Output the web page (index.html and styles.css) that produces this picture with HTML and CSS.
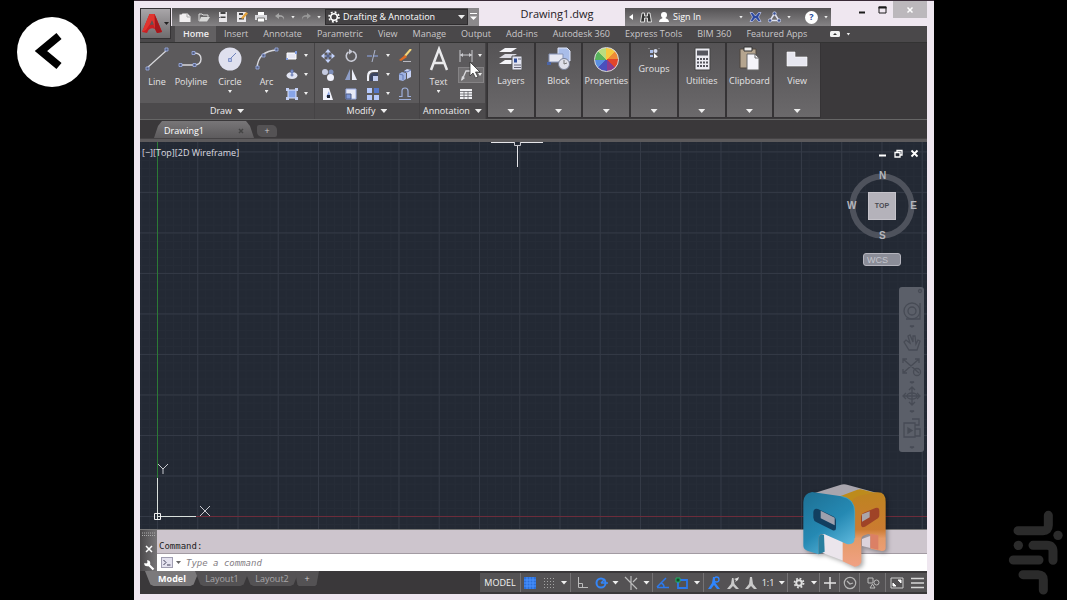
FILE: index.html
```html
<!DOCTYPE html>
<html lang="en">
<head>
<meta charset="utf-8">
<title>Drawing1.dwg</title>
<link rel="stylesheet" href="styles.css">
</head>
<body>
<aside class="side">
  <button class="back" aria-label="Back"><svg width="70" height="70" viewBox="0 0 70 70"><path d="M44 20 26 35l18 15" transform="translate(-2 -1)" fill="none" stroke="#000" stroke-width="8"/></svg></button>
</aside>

<main class="window">
  <header class="titlebar">
    <div class="quick">
      <button aria-label="New"><svg width="14" height="14" viewBox="0 0 14 14"><path d="M1.500 4.500h2l1-1h5l3 3V12h-11z" fill="#f1eff0"/><path d="M9 3.500V7h3.500" fill="none" stroke="#aaa"/></svg></button>
      <button aria-label="Open"><svg width="14" height="14" viewBox="0 0 14 14"><path d="M2 11V4h3l1 1h5v2" fill="none" stroke="#ddd"/><path d="M4 7h9l-3 4.500H2z" fill="#d8d8d8"/></svg></button>
      <button aria-label="Save"><svg width="14" height="14" viewBox="0 0 14 14"><path d="M3 2h8v10H3z" fill="#e9e7ea"/><path d="M4.500 6.500h5V8h-5zM4.500 2h5v2h-5z" fill="#444"/><path d="M3 7h1v1H3z" fill="#667"/></svg></button>
      <button aria-label="Save As"><svg width="14" height="14" viewBox="0 0 14 14"><path d="M2 2h9v10H2z" fill="#e9e7ea"/><path d="M4 8h5v1.500H4zM4 3h4v2H4z" fill="#444"/><path d="M6 8 11 2l2 1.500L8 9z" fill="#e4a33c"/></svg></button>
      <button aria-label="Print"><svg width="14" height="14" viewBox="0 0 14 14"><path d="M4 2h6v3H4z" fill="#fff"/><path d="M1 5h12v5H1z" fill="#d9d9dd"/><path d="M3.500 8h7v4h-7z" fill="#fff" stroke="#777"/></svg></button>
      <button aria-label="Undo"><svg width="12" height="12" viewBox="0 0 12 12"><path d="M5 2 1 5l4 3V6q4-1 5 3 1-5-5-5z" fill="#a5a5a5"/></svg></button>
      <i class="caret"></i>
      <button aria-label="Redo"><svg width="12" height="12" viewBox="0 0 12 12"><path d="M7 2l4 3-4 3V6Q3 5 2 9 1 4 7 4z" fill="#979797"/></svg></button>
      <i class="caret"></i>
      <label class="workspace">
        <svg width="14" height="14" viewBox="0 0 14 14"><circle cx="7" cy="7" r="3.300" fill="none" stroke="#fff" stroke-width="1.600"/><circle cx="7" cy="7" r="5" fill="none" stroke="#fff" stroke-width="1.600" stroke-dasharray="1.900 2.030"/></svg>
        <select aria-label="Workspace"><option>Drafting &amp; Annotation</option></select>
        <i class="caret wide"></i>
      </label>
      <button class="more" aria-label="Customize"><svg width="9" height="10" viewBox="0 0 9 10"><path d="M1 1.500h7" stroke="#fff"/><path d="M1 4.500h7L4.500 8z" fill="#fff"/></svg></button>
    </div>
    <h1 class="title">Drawing1.dwg</h1>
    <div class="info">
      <svg width="6" height="8" viewBox="0 0 6 8"><path d="M5 1v6L1 4z" fill="#fff"/></svg>
      <button aria-label="Search"><svg width="12" height="12" viewBox="0 0 12 12"><path d="M2 2h2.500v3h3V2H10l1.500 9H7.500V7h-3v4H.5z" fill="#333" stroke="#ddd"/></svg></button>
      <button class="signin"><svg width="12" height="12" viewBox="0 0 12 12"><circle cx="6" cy="4" r="3" fill="#fff"/><path d="M4.500 6h3v2h-3z" fill="#fff"/><path d="M1 11q0-3 4-4h2q4 1 4 4z" fill="#fff"/></svg>Sign In</button>
      <i class="caret"></i>
      <button aria-label="Exchange"><svg width="13" height="12" viewBox="0 0 13 12"><path d="M1 1.500h2.500L6.500 5l3-3.500H12L9.500 6l2.500 4.500H9.500l-3-3.500-3 3.500H1L3.500 6z" fill="#2b48a0" stroke="#c7cff0" stroke-width=".7"/></svg></button>
      <button aria-label="Connect"><svg width="13" height="12" viewBox="0 0 13 12"><path d="M6.500 2.500 11 9.500H2z" fill="none" stroke="#dfe3f4" stroke-width="1.500"/><g fill="#3c5395" stroke="#dfe3f4" stroke-width=".7"><circle cx="6.500" cy="2.500" r="1.700"/><circle cx="11" cy="9.500" r="1.700"/><circle cx="2" cy="9.500" r="1.700"/></g></svg></button>
      <i class="caret"></i>
      <button class="help" aria-label="Help"><span>?</span></button>
      <i class="caret"></i>
    </div>
    <div class="winctl">
      <button aria-label="Minimize"><svg width="8" height="8" viewBox="0 0 8 8"><path d="M1 6.500h6" stroke="#1c1c1c" stroke-width="2"/></svg></button>
      <button aria-label="Maximize"><svg width="9" height="8" viewBox="0 0 9 8"><path d="M1 1h7v6H1z" fill="none" stroke="#1c1c1c"/><path d="M.5 1.500h8" stroke="#1c1c1c" stroke-width="2"/></svg></button>
      <button class="close" aria-label="Close"><svg width="8" height="8" viewBox="0 0 8 8"><path d="m1.500 1.500 5 5m0-5-5 5" stroke="#fff" stroke-width="1.500"/></svg></button>
    </div>
  </header>

  <div class="app">
    <button class="appmenu" aria-label="Application menu">
      <svg width="20" height="22" viewBox="0 0 20 22"><path d="M0 19 7.500 1h5L20 19l-5 1-2-4q-4-2-6.500 1L5 20z" fill="#c91f23"/><path d="M7.500 1 0 19l4-2L10 8l3 8 7 3L12.500 1z" fill="#e0352f"/><path d="M10 7 8 12q3-1 4 0z" fill="#5b5557"/><path d="m12.500 1 7.500 18-5 1-2-4z" fill="#a5171c"/></svg>
      <i class="caret dark"></i>
    </button>
    <nav class="tabs">
      <button class="on">Home</button><button>Insert</button><button>Annotate</button><button>Parametric</button><button>View</button><button>Manage</button><button>Output</button><button>Add-ins</button><button>Autodesk 360</button><button>Express Tools</button><button>BIM 360</button><button>Featured Apps</button>
      <button class="mini" aria-label="Minimize ribbon"><svg width="10" height="6" viewBox="0 0 10 6"><rect width="10" height="6" rx="1.500" fill="#f2f2f2"/><path d="M3 4h4L5 2z" fill="#333"/></svg><i class="caret"></i></button>
    </nav>

    <section class="ribbon">
      <div class="panel draw">
        <div class="tools">
          <button class="big"><svg width="26" height="26" viewBox="0 0 26 26"><path d="M3 22 23 4" stroke="#d8d8dc" stroke-width="1.200"/><g fill="#545d7e" stroke="#9db0e8" stroke-width=".8"><path d="M2 21h3v3H2zM21 2h3v3h-3z"/></g></svg>Line</button>
          <button class="big"><svg width="26" height="26" viewBox="0 0 26 26"><path d="M2 19h14q7 0 7-6t-7-6" fill="none" stroke="#d8d8dc" stroke-width="1.400"/><g fill="#545d7e" stroke="#9db0e8" stroke-width=".8"><path d="M1 17.500h3v3H1zM15 17.500h3v3h-3zM14 5.500h3v3h-3z"/></g></svg>Polyline</button>
          <button class="big"><svg width="26" height="26" viewBox="0 0 26 26"><circle cx="13" cy="13" r="11.500" fill="#dfe0ee"/><path d="m13 13 6-6" stroke="#6e83bd"/><path d="M11.500 12.500h3v3h-3z" fill="#b7c3ea" stroke="#6e83bd" stroke-width=".8"/></svg>Circle<i class="caret"></i></button>
          <button class="big"><svg width="26" height="26" viewBox="0 0 26 26"><path d="M3 22Q4 5 23 4" fill="none" stroke="#d8d8dc" stroke-width="1.300"/><g fill="#545d7e" stroke="#9db0e8" stroke-width=".8"><path d="M2 20h3v3H2zM8 8h3v3H8zM21 2h3v3h-3z"/></g></svg>Arc<i class="caret"></i></button>
          <div class="smalls one">
            <button aria-label="Rectangle"><svg width="14" height="14" viewBox="0 0 14 14"><path d="M2 4h9v6H2z" fill="#e5e6f4" stroke="#fff"/><path d="M10 2h2v3h-2zM1 9h2v2H1z" fill="#7f9be0"/></svg></button><i class="caret"></i>
            <button aria-label="Ellipse"><svg width="14" height="14" viewBox="0 0 14 14"><ellipse cx="7" cy="7.500" rx="5.500" ry="3.500" fill="#e2e5f3"/><path d="M6 2h2v3H6zM5.500 7h3M7 5.500v3" fill="#9db0e8" stroke="#5c71ad"/></svg></button><i class="caret"></i>
            <button aria-label="Hatch"><svg width="14" height="14" viewBox="0 0 14 14"><path d="M3 3h8v8H3z" fill="#87a4e8" stroke="#dfe6ff"/><path d="M1 1h3v3H1zM10 1h3v3h-3zM1 10h3v3H1zM10 10h3v3h-3z" fill="#c3d0f6"/></svg></button><i class="caret"></i>
          </div>
        </div>
        <button class="foot">Draw<i class="caret wide"></i></button>
      </div>

      <div class="panel modify">
        <div class="tools">
          <div class="smalls mod">
            <button aria-label="Move"><svg width="14" height="14" viewBox="0 0 14 14"><path d="m7 0 3 3.500H4zM7 14l3-3.500H4zM0 7l3.500-3v6zM14 7l-3.500-3v6z" fill="#c3d2fb"/><path d="M7 3v8M3 7h8" stroke="#a9bbee"/><path d="M5.500 5.500h3v3h-3z" fill="#53628f"/></svg></button>
            <button aria-label="Rotate"><svg width="14" height="14" viewBox="0 0 14 14"><path d="M4.500 3A5 5 0 1 0 9 2.500" fill="none" stroke="#c8cad5" stroke-width="1.600"/><path d="m5 0 4 2.500-4 3z" fill="#c8cad5"/></svg></button>
            <button aria-label="Trim"><svg width="14" height="14" viewBox="0 0 14 14"><path d="M1 7h12" stroke="#8fa8ea" stroke-dasharray="5 1"/><path d="M9 1 6 13" stroke="#aeb6cd"/></svg></button><i class="caret"></i>
            <button aria-label="Erase"><svg width="14" height="14" viewBox="0 0 14 14"><path d="M13 0 7 7" stroke="#f3d67a" stroke-width="2"/><path d="m7 6 2 2-6 4-2-1z" fill="#e06c24"/><path d="M5 12.500h8" stroke="#b9b9c0"/></svg></button>
            <button aria-label="Copy"><svg width="14" height="14" viewBox="0 0 14 14"><circle cx="4" cy="4" r="3" fill="#c5cae0"/><circle cx="10" cy="4" r="2.500" fill="#7d8db8"/><circle cx="9.500" cy="9.500" r="3.500" fill="#f0f1fb"/></svg></button>
            <button aria-label="Mirror"><svg width="14" height="14" viewBox="0 0 14 14"><path d="M6 1v11H1z" fill="#8e9ec8"/><path d="M8 1v11h5z" fill="#eceef8"/></svg></button>
            <button aria-label="Fillet"><svg width="14" height="14" viewBox="0 0 14 14"><path d="M1 13V8q0-6 6-6h5v2H8Q3 4 3 9v4z" fill="#f0f1f8"/><path d="M4 13V9q0-4 4-4h4v8z" fill="#3c4562"/><path d="M7 8h5v5H7z" fill="#c3cdf0"/></svg></button><i class="caret"></i>
            <button aria-label="Explode"><svg width="14" height="14" viewBox="0 0 14 14"><path d="m1 6 3-2 4 1v6l-3 2-4-1z" fill="#9fb2e3"/><path d="m6 3 3-2 4 1v7l-4 2V5z" fill="#c6d1f4"/><path d="m6 3 3 1 4-2M1 6l4 1v5" fill="none" stroke="#6478b0"/></svg></button>
            <button aria-label="Stretch"><svg width="14" height="14" viewBox="0 0 14 14"><path d="M2 1h6l4 12H2z" fill="#f0f1fa"/><path d="m5 10 3-6 1 5z" fill="#8ba4e3"/><path d="M6 8h3v3H6z" fill="#1c2437"/></svg></button>
            <button aria-label="Scale"><svg width="14" height="14" viewBox="0 0 14 14"><path d="M2 2h10v10H2z" fill="#e7e9f6" stroke="#9db0e8"/><path d="M2 7h5v5H2z" fill="#7f98d8" stroke="#4f5d85"/></svg></button>
            <button aria-label="Array"><svg width="14" height="14" viewBox="0 0 14 14"><path d="M1 1h5v5H1zM1 8h5v5H1zM8 8h5v5H8z" fill="#b5c8fc"/><path d="M8 1h5v5H8z" fill="#5677c9"/></svg></button><i class="caret"></i>
            <button aria-label="Offset"><svg width="14" height="14" viewBox="0 0 14 14"><path d="M1 12.500h12M1 9.500h3V4q0-3 3-3t3 3v5.500h3" fill="none" stroke="#9eb0dd" stroke-width="1.200"/></svg></button>
          </div>
        </div>
        <button class="foot">Modify<i class="caret wide"></i></button>
      </div>

      <div class="panel annot">
        <div class="tools">
          <button class="big"><svg width="26" height="26" viewBox="0 0 26 26"><path d="M5 24 13 3l8 21M7.500 17h11" fill="none" stroke="#eaeaec" stroke-width="2.500"/></svg>Text<i class="caret"></i></button>
          <div class="smalls one">
            <button aria-label="Dimension"><svg width="14" height="14" viewBox="0 0 14 14"><path d="M1 1v12M13 1v12M1 6h12" stroke="#c9c9cd" fill="none"/><path d="m1 6 3-2v4zM13 6l-3-2v4z" fill="#c9c9cd"/></svg></button><i class="caret"></i>
            <div class="hot"><button aria-label="Leader"><svg width="14" height="14" viewBox="0 0 14 14"><path d="M2 12 6 3h6" fill="none" stroke="#d8d8dc" stroke-width="1.300"/><path d="m1 13 1-5 3 2z" fill="#d8d8dc"/></svg></button><i class="caret"></i></div>
            <button aria-label="Table"><svg width="14" height="14" viewBox="0 0 14 14"><path d="M1 2h12v10H1z" fill="#f1f1f4"/><path d="M1 4.500h12M1 7h12M1 9.500h12M5 4v8M9 4v8" stroke="#66656b" stroke-width=".8"/></svg></button><i></i>
          </div>
        </div>
        <button class="foot">Annotation<i class="caret wide"></i></button>
        <svg class="cursor" width="13" height="18" viewBox="0 0 13 18"><path d="M1 1v14l3-3 2.500 5 2.500-1-2.500-5H11z" fill="#fff" stroke="#333" stroke-width=".8"/></svg>
      </div>

      <div class="folds">
        <button class="fold"><svg width="26" height="26" viewBox="0 0 26 26"><path d="M7 2h12l-6 4H1z" fill="#f4f4f8"/><path d="M7 8h12l-6 4H1z" fill="#dcdce4"/><path d="M7 14h12l-6 4H1z" fill="#f4f4f8"/><path d="M14 10h10v14H14z" fill="#e3e5f2" stroke="#555"/><path d="M16 12.500h3v4h-3z" fill="#2f4e9b"/><path d="M20 13h3M16 19h7M16 21.500h7" stroke="#667"/></svg>Layers<i class="caret wide"></i></button>
        <button class="fold"><svg width="26" height="26" viewBox="0 0 26 26"><path d="M12 2h9l3 3v10H12z" fill="#a9bde9" stroke="#dfe6fa"/><path d="M3 8h14v8H3z" fill="#e7e8f2" stroke="#8794b8"/><path d="M1 16h4v3H1z" fill="#4a64a6"/><circle cx="18" cy="18" r="5.500" fill="#dfe0ea" stroke="#777f96"/><path d="M18 14v4l3-1" fill="none" stroke="#777"/></svg>Block<i class="caret wide"></i></button>
        <button class="fold"><span class="wheel"></span>Properties<i class="caret wide"></i></button>
        <button class="fold groups"><svg width="14" height="14" viewBox="0 0 14 14"><path d="M3 4h3v3H3zM3 9h3v2H3z" fill="#a9bde9"/><circle cx="8.500" cy="5" r="2" fill="#d3d9ec"/><path d="m7 7 4 4-2 .5L7 12z" fill="#fff"/><path d="M12 2v1M2 2v1" stroke="#aaa"/></svg>Groups<i class="caret wide"></i></button>
        <button class="fold"><svg width="26" height="26" viewBox="0 0 26 26"><path d="M6 2h15v22H6z" fill="#ececf3" stroke="#444"/><path d="M8 4.500h11v5H8z" fill="#55565f"/><path d="M8 13h11M8 16.500h11M8 20h11" stroke="#55565f" stroke-width="2.200" stroke-dasharray="2 1"/></svg>Utilities<i class="caret wide"></i></button>
        <button class="fold"><svg width="26" height="26" viewBox="0 0 26 26"><path d="M4 3h16v19H4z" fill="#b5a58f" stroke="#4f463e"/><path d="M8 1h8v4H8z" fill="#eee" stroke="#333"/><path d="M11 8h8l4 4v12H11z" fill="#f5f5fa" stroke="#666"/><path d="M19 8v4h4" fill="none" stroke="#666"/></svg>Clipboard<i class="caret wide"></i></button>
        <button class="fold"><svg width="26" height="26" viewBox="0 0 26 26"><path d="M3 6h8v5h12v9H3z" fill="#e6e6ef" stroke="#fff" stroke-width=".6"/></svg>View<i class="caret wide"></i></button>
      </div>
    </section>

    <nav class="files">
      <button class="file"><span>Drawing1</span><svg width="6" height="6" viewBox="0 0 6 6"><path d="m1 1 4 4m0-4L1 5" stroke="#444" stroke-width="1.500"/></svg></button>
      <button class="add" aria-label="New drawing">+</button>
    </nav>

    <section class="canvas">
      <div class="axis-x"></div><div class="axis-y"></div>
      <span class="viewport">[−][Top][2D Wireframe]</span>
      <svg class="cross" width="52" height="26" viewBox="0 0 52 26"><path d="M0 1.500h23M29 1.500h23M26.500 5v21" stroke="#e6e6ea"/><path d="M23.500 1v3.500h6V1" fill="none" stroke="#c6c6cc"/></svg>
      <svg class="ucs" width="62" height="62" viewBox="0 0 62 62"><path d="M7.500 16v42M7 54.500h39" fill="none" stroke="#d9e0dc"/><path d="M4.500 51.500h6v6h-6z" fill="none" stroke="#f0f0f0"/><path d="m8 2 5 5 5-5M13 7v5M50 44l10 10m0-10L50 54" fill="none" stroke="#c8c9cf"/></svg>
      <div class="docctl">
        <button aria-label="Minimize drawing"><svg width="9" height="9" viewBox="0 0 9 9"><path d="M1 6.500h7" stroke="#fff" stroke-width="2"/></svg></button>
        <button aria-label="Restore drawing"><svg width="9" height="9" viewBox="0 0 9 9"><path d="M3 3V1.500h5V6H6M1 3.500h5V8H1z" fill="none" stroke="#fff" stroke-width="1.300"/></svg></button>
        <button aria-label="Close drawing"><svg width="9" height="9" viewBox="0 0 9 9"><path d="m1.500 1.500 6 6m0-6-6 6" stroke="#fff" stroke-width="1.800"/></svg></button>
      </div>
      <div class="compass">
        <svg width="72" height="72" viewBox="0 0 72 72"><circle cx="36" cy="36" r="29.500" fill="none" stroke="#4e525c" stroke-width="6"/></svg>
        <b class="n">N</b><b class="w">W</b><b class="e">E</b><b class="s">S</b>
        <button>TOP</button>
      </div>
      <button class="wcs">WCS</button>
      <div class="navbar">
        <svg width="25" height="165" viewBox="0 0 25 165" fill="none" stroke="#474b55" stroke-width="1.300"><circle cx="21" cy="4" r="1.500"/><circle cx="13" cy="24" r="8"/><circle cx="13" cy="24" r="4"/><path d="M21 16v16H7"/><path d="m11 39 2 1 2-1z" fill="#474b55"/><path d="m5 55 5 8h8l3-9-2-1-2 4-1-8h-2v6l-3-7-2 1 2 7-4-3zM4 72l16 14M20 72 4 86M4 76v-4h4M16 72h4v4M4 82v4h4"/><circle cx="18" cy="85" r="3.500"/><path d="m11 95 2 1 2-1zM11 124l2 1 2-1z" fill="#474b55"/><path d="M13 100v18M4 109h17M10 103l3-3 3 3M10 115l3 3 3-3M7 106l-3 3 3 3M18 106l3 3-3 3"/><ellipse cx="13" cy="109" rx="5" ry="3"/><path d="M5 136h11v14H5zM13 132h7v6h-4M16 142h5v7h-5"/><path d="m9 141 4 2.500-4 2.500z" fill="#474b55"/><path d="m11 160 2 1 2-1z"/></svg>
      </div>
    </section>

    <section class="command">
      <div class="grip">
        <svg width="14" height="6" viewBox="0 0 14 6"><path d="M0 1h14M0 3.500h14" stroke="#aaa" stroke-dasharray="1 1"/></svg>
        <button aria-label="Close command line"><svg width="8" height="8" viewBox="0 0 8 8"><path d="m1 1 6 6m0-6L1 7" stroke="#fff" stroke-width="1.500"/></svg></button>
        <button aria-label="Customize command line"><svg width="12" height="12" viewBox="0 0 12 12"><path d="m5 5 5.500 5.500" stroke="#fff" stroke-width="2.200"/><path d="M4 1.300A3 3 0 1 1 1.300 4L3.500 4.500 4.500 3.500z" fill="#fff"/></svg></button>
      </div>
      <div class="history">Command:</div>
      <label class="prompt">
        <svg width="12" height="11" viewBox="0 0 12 11"><rect x=".5" y=".5" width="11" height="10" fill="#e4e2ef" stroke="#9f9db1"/><path d="m2.500 3 2.500 2.500L2.500 8M6 8h3.500" fill="none" stroke="#3d3c57"/></svg>
        <i class="caret grey"></i>
        <input type="text" placeholder="Type a command" aria-label="Command">
      </label>
    </section>

    <footer class="bottom">
      <nav class="layouts"><button class="on">Model</button><button>Layout1</button><button>Layout2</button><button class="plus" aria-label="New layout">+</button></nav>
      <div class="status">
        <button class="sep">MODEL</button>
        <button aria-label="Grid"><svg width="12" height="12" viewBox="0 0 12 12"><path d="M0 0h12v12H0z" fill="#2b6fd8"/><path d="M3 0v12M6 0v12M9 0v12M0 3h12M0 6h12M0 9h12" stroke="#4b92ff"/></svg></button>
        <button aria-label="Snap"><svg width="12" height="12" viewBox="0 0 12 12"><path d="M1 1.500h11M1 4.500h11M1 7.500h11M1 10.500h11" stroke="#a5a5a5" stroke-dasharray="1 2"/></svg></button>
        <button class="sep" aria-label="Snap options"><i class="caret wide"></i></button>
        <button aria-label="Ortho"><svg width="12" height="12" viewBox="0 0 12 12"><path d="M2.500 0v10.500H12M2.500 6.500h4v4" fill="none" stroke="#bbb"/></svg></button>
        <button aria-label="Polar"><svg width="13" height="12" viewBox="0 0 13 12"><circle cx="6" cy="6" r="4.500" fill="none" stroke="#3585f5" stroke-width="2"/><path d="M6 6h7M6 6l4-4" stroke="#3585f5" stroke-width="1.500"/></svg></button>
        <button aria-label="Polar options"><i class="caret wide"></i></button>
        <button aria-label="Isodraft"><svg width="14" height="14" viewBox="0 0 14 14"><path d="m1 1 12 12M7 0v14M9 6l4-4" stroke="#bbb" stroke-width="1.200"/></svg></button>
        <button class="sep" aria-label="Isodraft options"><i class="caret wide"></i></button>
        <button aria-label="Tracking"><svg width="13" height="12" viewBox="0 0 13 12"><path d="M1 10.500h12M1 10l9-9M5 6q3 1 3 4" fill="none" stroke="#2c79ec" stroke-width="1.500"/></svg></button>
        <button aria-label="Object snap"><svg width="13" height="12" viewBox="0 0 13 12"><path d="M3 3h9v8H3z" fill="none" stroke="#2c79ec" stroke-width="1.800"/><path d="M1 1h4v4H1z" fill="#124d2c" stroke="#20b065"/></svg></button>
        <button class="sep" aria-label="Object snap options"><i class="caret wide"></i></button>
        <button aria-label="Annotation visibility"><svg width="14" height="14" viewBox="0 0 14 14"><path d="M6 1 5 7l-4 6h3l3-4 3 4h3L8.500 7l-1-6z" fill="#2f86ff"/><circle cx="9.500" cy="3.500" r="2.500" fill="none" stroke="#2f86ff" stroke-width="1.300"/></svg></button>
        <button aria-label="Auto scale"><svg width="14" height="14" viewBox="0 0 14 14"><path d="M6 2 5 8l-4 5h3l3-3 3 3h3L8.500 8l-1-6z" fill="#c9c9c9"/><path d="m9 6 1-2-2-1 3-1 2-1-1 3z" fill="#ddd"/></svg></button>
        <button aria-label="Annotation scale"><svg width="14" height="14" viewBox="0 0 14 14"><path d="M6 1 5 8l-4 5h3l3-3 3 3h3L9 8 8 1z" fill="#c9c9c9"/></svg></button>
        <button class="sep scale">1:1<i class="caret wide"></i></button>
        <button aria-label="Workspace switching"><svg width="12" height="12" viewBox="0 0 12 12"><circle cx="6" cy="6" r="2.800" fill="none" stroke="#dedede" stroke-width="2"/><circle cx="6" cy="6" r="4.500" fill="none" stroke="#dedede" stroke-width="1.800" stroke-dasharray="1.770 1.770"/></svg></button>
        <button class="sep" aria-label="Workspace options"><i class="caret wide"></i></button>
        <button class="sep" aria-label="Monitor"><svg width="12" height="12" viewBox="0 0 12 12"><path d="M6 0v12M0 6h12" stroke="#e2e2e2" stroke-width="1.500"/></svg></button>
        <button class="sep" aria-label="Isolate"><svg width="14" height="14" viewBox="0 0 14 14"><circle cx="7" cy="7" r="5.700" fill="none" stroke="#b5b5b5" stroke-width="1.200"/><path d="m4 5 3 3 3-1" fill="none" stroke="#b5b5b5" stroke-width="1.300"/></svg></button>
        <button class="sep" aria-label="Hardware"><svg width="14" height="14" viewBox="0 0 14 14"><path d="M2 2h5v5H2zM4 12l2.500-4L9 12z" fill="none" stroke="#bbb"/><circle cx="10.500" cy="6.500" r="2.500" fill="none" stroke="#bbb"/></svg></button>
        <button aria-label="Clean screen"><svg width="14" height="12" viewBox="0 0 14 12"><path d="M1 1h12v10H1z" fill="none" stroke="#ccc"/><path d="M8 3h3v3zM3 6v3h3z" fill="#fff" stroke="#fff"/></svg></button>
        <button aria-label="Customization"><svg width="13" height="12" viewBox="0 0 13 12"><path d="M0 1.500h13M0 6h13M0 10.500h13" stroke="#d6d6d6" stroke-width="1.500"/></svg></button>
      </div>
    </footer>
  </div>
</main>

<aside class="side">
  <svg class="mark" width="55" height="85" viewBox="685 120 165 255"><g fill="none" stroke="#2b2b2b" stroke-width="27" stroke-linecap="round" stroke-linejoin="round"><path d="M715 182h75q16 0 16-16v-30M760 226h42q18 0 18 18v27M701 270h77M730 314h45q16 0 16 16v30"/></g><circle cx="835" cy="196" r="14" fill="#2b2b2b"/><circle cx="716" cy="226" r="14" fill="#2b2b2b"/></svg>
</aside>

<svg class="cube" width="90" height="87" viewBox="60 35 270 261">
  <defs>
    <linearGradient id="blue" x1="0" y1="0" x2=".6" y2="1"><stop offset="0" stop-color="#1d6f93"/><stop offset=".6" stop-color="#2589b3"/><stop offset="1" stop-color="#58b3d8"/></linearGradient>
    <linearGradient id="orange" x1="0" y1="0" x2="0" y2="1"><stop offset="0" stop-color="#bd8420"/><stop offset=".5" stop-color="#cb7b31"/><stop offset=".62" stop-color="#e59a67"/><stop offset="1" stop-color="#f0a184"/></linearGradient>
  </defs>
  <path d="M85 74 180 44q12-4 24 0l96 26-80 26z" fill="#a8a5ad"/>
  <path d="m180 78 52-20q8-3 16 0l54 14-70 30z" fill="#bd8b1c"/>
  <path d="M128 190h74v86l-74-28z" fill="#ebe5ec"/>
  <path d="M215 96q2-14 22-20l50-10q30-4 30 28v140q-1 9-12 8l-33-7v-36q0-10-10-7l-12 4q-6 2-6 10v70q-6 13-20 13l-36-16v-64z" fill="url(#orange)"/>
  <path d="m246 206 25-9v36l-25-6z" fill="#dcd3dc"/><path d="m271 190 24 5v43l-24-5z" fill="#db8065"/>
  <path d="M243 142q0-11 9-15l34-14q12-4 12 9v12q0 9-9 13l-34 22q-12 5-12-7z" fill="#9f4327"/><path d="m246 132 23-9v18l-23 13z" fill="#aaa5aa"/>
  <path d="M70 95q0-25 26-30l88 13q40 7 40 47v78q0 22-24 18l-66-29q-18-5-18 14v46l-34-11q-12-5-12-15z" fill="url(#blue)"/>
  <path d="M132 193q-16-4-16 13v46l18-8z" fill="#297f9f"/>
  <path d="M184 78q40 7 40 47v78" fill="none" stroke="#47a9ce" stroke-width="2"/>
  <path d="M100 126q1-14 14-10l45 22q9 4 9 14v21q0 10-10 7l-48-24q-9-4-10-14z" fill="#123f60"/><path d="m122 121 42 21v23l-42-21z" fill="#9da0ad"/>
</svg>
</body>
</html>
```
FILE: styles.css
```css
* { box-sizing: border-box; }
body {
  margin: 0;
  min-height: 100vh;
  display: grid;
  grid-template-columns: 134px 1fr 133px;
  background: #000;
  color: #e4e2e4;
  font: 9px/12px "Open Sans", "Noto Sans", sans-serif;
  position: relative;
}
button, input, select { font: inherit; color: inherit; border: 0; padding: 0; background: none; margin: 0; }
button { display: flex; align-items: center; justify-content: center; white-space: nowrap; }
svg { display: block; flex: none; }

.side { display: flex; flex-direction: column; }
.back { width: 70px; height: 70px; margin: 17px; border-radius: 50%; background: #fff; }
.mark { margin: auto 4px 5px auto; }
.cube { position: absolute; right: 177px; bottom: 31px; filter: drop-shadow(2px 2px 2px #0005); }

.caret { display: block; flex: none; width: 4px; height: 3px; background: #eee; clip-path: polygon(0 0, 100% 0, 50% 100%); }
.caret.wide { width: 7px; height: 4px; }
.caret.dark { background: #222; width: 5px; height: 3px; }
.caret.grey { background: #666; width: 5px; }

.window {
  display: flex;
  flex-direction: column;
  background: #efe7f0;
  border-top: 1px solid #3a2b38;
  padding: 0 7px 6px 6px;
}
.titlebar { display: flex; height: 25px; align-items: flex-end; padding-left: 32px; }
.quick, .info { height: 18px; display: flex; align-items: center; background: linear-gradient(#555355, #858385); }
.quick { width: 307px; gap: 5px; padding-left: 6px; }
.quick > button { width: 14px; }
.quick > .caret { margin: 0 -1px; }
.workspace { flex: 1; display: flex; align-items: center; gap: 2px; height: 16px; padding: 0 2px 0 1px; background: #434143; border: 1px solid #2e2c2e; color: #fff; }
.workspace select { flex: 1; appearance: none; min-width: 0; height: 14px; }
.quick .more { width: 11px; height: 18px; margin-left: -5px; background: #8b898b; }
.title { flex: 1; margin: 0; padding-left: 10px; font-size: 11px; line-height: 24px; font-weight: 400; text-align: center; color: #252125; }
.info { width: 206px; gap: 6px; padding: 0 3px; color: #fff; }
.info .signin { gap: 3px; flex: 1; justify-content: flex-start; }
.info .help { width: 13px; height: 13px; border-radius: 50%; background: #fff; color: #244a9b; font-weight: 700; margin-left: 8px; }
.winctl { align-self: flex-start; display: flex; height: 17px; width: 96px; justify-content: flex-end; }
.winctl button { width: 21px; }
.winctl .close { width: 34px; background: #bcb8bc; }

.app {
  flex: 1;
  display: grid;
  grid-template-rows: 16px 78px 19px 1fr 42px 23px;
  grid-template-columns: minmax(0, 1fr);
  background: #3a383a;
  position: relative;
}
.appmenu { position: absolute; left: 0; top: -18px; width: 31px; height: 31px; gap: 2px; background: linear-gradient(#a9a6a9, #6e6c6e); border: 1px solid #353335; z-index: 1; }
.tabs { display: flex; padding-left: 35px; background: #4a484a; color: #c9c7c9; }
.tabs button { padding: 0 7px 0 8px; }
.tabs .on { background: #626062; color: #f0eef0; font-weight: 600; }
.tabs .mini { gap: 6px; padding: 0 16px; }

.ribbon { display: flex; background: #3b393b; border-top: 1px solid #333; border-bottom: 1px solid #666; }
.panel { display: flex; flex-direction: column; background: #5c5a5c; border-right: 1px solid #454345; position: relative; }
.draw { width: 175px; }
.modify { width: 105px; }
.annot { width: 66px; }
.tools { flex: 1; display: flex; padding-top: 3px; }
.foot { height: 16px; gap: 5px; background: #4c4a4c; color: #f0eef0; }
.big { flex-direction: column; justify-content: flex-start; width: 34px; padding-bottom: 2px; }
.big svg { margin-bottom: 4px; }
.big .caret { margin-top: 2px; }
.draw .big:nth-child(3) { width: 44px; }
.draw .big:nth-child(4) { width: 29px; }
.annot .big { width: 37px; }
.smalls { display: grid; align-content: start; align-items: center; justify-items: center; grid-auto-rows: 19px; }
.smalls.one { grid-template-columns: 18px 10px; }
.smalls.mod { grid-template-columns: 25px 21px 23px 8px 26px; }
.hot { grid-column: 1 / 3; display: flex; align-items: center; gap: 4px; width: 26px; height: 16px; padding: 0 1px; background: #716f71; border: 1px solid #858385; }
.cursor { position: absolute; left: 49px; top: 18px; }

.draw .smalls { margin-left: 2px; }

.folds { display: flex; width: 334px; margin: 0 0 1px 1px; }
.fold { flex: 1 1 0; min-width: 0; flex-direction: column; justify-content: flex-start; padding: 3px 0 4px; background: linear-gradient(#555355, #6b696b); border: 1px solid #353335; border-width: 0 1px 1px; }
.fold svg, .fold .wheel { margin-bottom: 3px; }
.fold .caret { margin-top: auto; }
.wheel { flex: none; width: 25px; height: 25px; margin-top: 1px; border: 1px solid #ddd; border-radius: 50%; background: conic-gradient(#f6c83f 0 45deg, #ee8b35 0 90deg, #e2452b 0 135deg, #8a3c8e 0 180deg, #4a50bd 0 225deg, #5a8fe0 0 270deg, #58b35c 0 315deg, #b9dd7f 0); }
.fold .wheel { margin-bottom: 3px; }

.files { display: flex; align-items: flex-end; padding-left: 14px; border-bottom: 1px solid #454345; }
.file { width: 100px; height: 17px; justify-content: space-between; padding: 2px 10px 0; color: #fff; background: linear-gradient(#787678, #5d5b5d); clip-path: polygon(8% 0, 92% 0, 96% 30%, 100% 100%, 0 100%, 4% 30%); }
.add { width: 20px; height: 12px; margin-left: 3px; margin-bottom: 1px; background: #545254; border-radius: 2px 5px 2px 5px; color: #ccc; }

.canvas {
  position: relative;
  border-top: 3px solid #5c5a5c;
  background-color: #232934;
  background-image:
    linear-gradient(90deg, #343a46 1px, transparent 1px),
    linear-gradient(0deg, #343a46 1px, transparent 1px),
    linear-gradient(90deg, #262c37 1px, transparent 1px),
    linear-gradient(0deg, #262c37 1px, transparent 1px);
  background-size: 5.115% 100%, 100% 10.47%, 1.023% 100%, 100% 2.094%;
  background-position: 17px 0, 0 calc(100% - 12px), 17px 0, 0 calc(100% - 12px);
}
.axis-x { position: absolute; left: 17px; right: 0; bottom: 12px; height: 1px; background: #6d2c3a; }
.axis-y { position: absolute; left: 17px; top: 0; bottom: 12px; width: 1px; background: #2b7a35; }
.viewport { position: absolute; left: 2px; top: 5px; color: #dcdce0; }
.cross { position: absolute; left: 351px; top: -1px; }
.ucs { position: absolute; left: 10px; bottom: 5px; }
.docctl { position: absolute; right: 8px; top: 7px; display: flex; gap: 7px; }
.compass { position: absolute; right: 9px; top: 28px; width: 72px; height: 72px; color: #b5b6bc; font: 700 10px/12px "Liberation Sans", sans-serif; }
.compass b { position: absolute; }
.compass .n { left: 33px; top: 0; }
.compass .s { left: 33px; bottom: 0; }
.compass .w { left: 1px; top: 30px; }
.compass .e { right: 1px; top: 30px; }
.compass button { position: absolute; left: 22px; top: 22px; width: 28px; height: 28px; background: #b4b2ba; border: 1px solid #c5c3ca; color: #4a4a52; font-size: 7px; }
.wcs { position: absolute; right: 26px; top: 111px; width: 38px; height: 13px; justify-content: flex-start; padding-left: 3px; border: 1px solid #b5b5be; border-radius: 3px; background: #8b8d98; color: #c3c4cc; font-family: "Liberation Sans", sans-serif; }
.navbar { position: absolute; right: 3px; top: 145px; width: 25px; height: 165px; border-radius: 3px; background: #5b5f69; }

.command { display: grid; grid-template: 24px 1fr / 17px 1fr; border-top: 1px solid #777; color: #222; font-family: "DejaVu Sans Mono", monospace; }
.grip { grid-row: 1 / 3; display: flex; flex-direction: column; align-items: center; justify-content: space-between; padding: 2px 0 0; background: linear-gradient(90deg, #4b494b, #777577); }
.history { padding: 10px 2px 0; background: #cdc5cd; border-bottom: 1px solid #a39ba3; }
.prompt { display: flex; align-items: center; gap: 3px; padding-left: 4px; background: #fff; }
.prompt input { flex: 1; outline: 0; padding-left: 2px; font-style: italic; }
.prompt input::placeholder { color: #858085; opacity: 1; }

.bottom { display: flex; justify-content: space-between; align-items: flex-start; }
.layouts { display: flex; padding-left: 5px; }
.layouts button { width: 54px; height: 15px; margin-right: -4px; background: #545254; color: #a9a7a9; clip-path: polygon(0 0, 100% 0, 90% 90%, 84% 100%, 16% 100%, 10% 90%); }
.layouts .on { background: #7b797b; color: #fff; font-weight: 700; }
.layouts .plus { width: 24px; color: #ccc; }
.status {
  display: grid;
  grid-template-columns: 41px 18px 19px 13px 21px 18px 11px 20px 12px 19px 19px 13px 19px 19px 18px 28px 21px 11px 20px 20px 26px 22px 19px;
  height: 19px;
  margin-top: 2px;
  background: #545254;
  color: #f2f2f2;
}
.sep { border-right: 1px solid #757375; }
.scale { gap: 4px; }
```
